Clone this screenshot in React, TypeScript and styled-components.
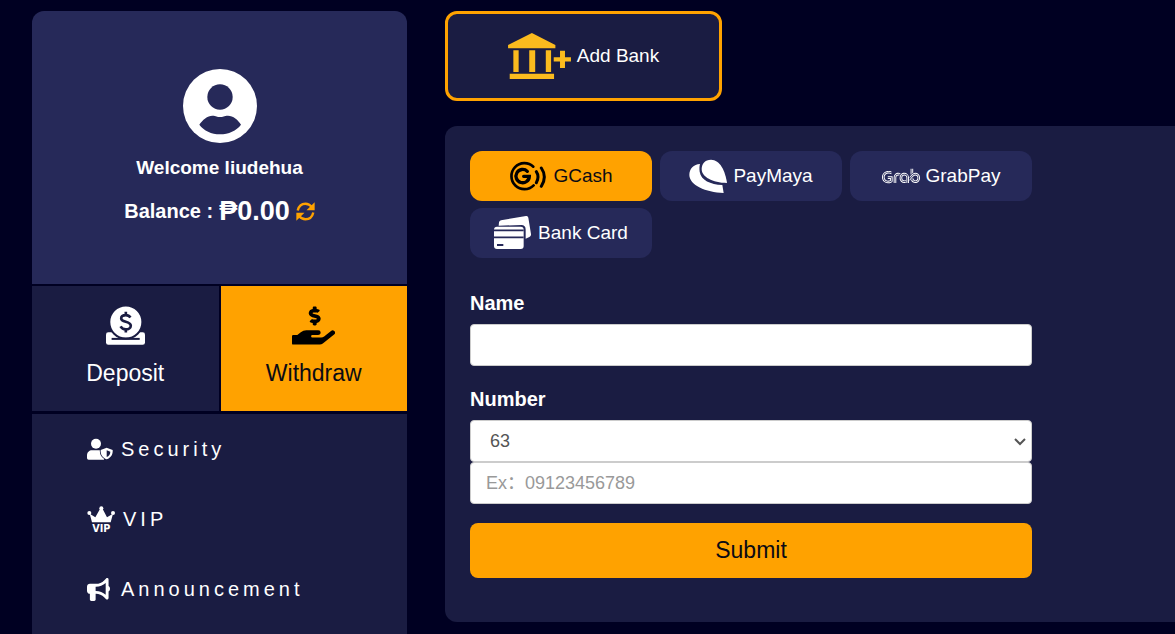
import React from "react";
import styled, { createGlobalStyle } from "styled-components";
import { FaHandHoldingUsd } from "react-icons/fa";
import { FaBullhorn } from "react-icons/fa6";
import { SiGrab } from "react-icons/si";

const color = {
  page: "#000022",
  panel: "#1a1c42",
  card: "#262959",
  accent: "#ffa200",
  gold: "#fbbb1e",
  ink: "#0b0b14",
};

const GlobalStyle = createGlobalStyle`
  * { box-sizing: border-box; }
  body {
    margin: 0;
    background: ${color.page};
    color: #fff;
    font-family: "Liberation Sans", "Noto Sans CJK SC", sans-serif;
  }
  button, input, select { font-family: inherit; margin: 0; }
  svg { display: block; flex: none; }
`;

const Page = styled.div`
  display: flex;
  align-items: stretch;
  gap: 38px;
  min-height: 100vh;
  padding: 11px 0 0 32px;
`;

const Sidebar = styled.aside`
  flex: 0 0 375px;
  display: flex;
  flex-direction: column;
`;

const Profile = styled.section`
  display: flex;
  flex-direction: column;
  align-items: center;
  padding: 58px 16px 57px;
  border-radius: 12px 12px 0 0;
  background: ${color.card};
`;

const Welcome = styled.h1`
  margin: 13px 0 15px;
  font-size: 19px;
  line-height: 24px;
`;

const Balance = styled.div`
  display: flex;
  align-items: center;
  gap: 6px;
  font-size: 20px;
  font-weight: bold;
  line-height: 32px;
`;

const Amount = styled.strong`
  font-size: 27px;
`;

const IconButton = styled.button`
  padding: 0;
  border: 0;
  background: none;
  color: ${color.accent};
  cursor: pointer;
`;

const Actions = styled.div`
  display: grid;
  grid-template-columns: 1fr 1fr;
  gap: 2px;
  margin: 2px 0 3px;
`;

const Action = styled.button<{ $active?: boolean }>`
  display: flex;
  flex-direction: column;
  align-items: center;
  gap: 14px;
  padding: 20px 8px 24px;
  border: 0;
  background: ${(p) => (p.$active ? color.accent : color.panel)};
  color: ${(p) => (p.$active ? color.ink : "#fff")};
  font-size: 23px;
  line-height: 28px;
  cursor: pointer;
`;

const WithdrawIcon = styled(FaHandHoldingUsd)`
  width: 43px;
  height: 39px;
  color: #000;
`;

const Menu = styled.nav`
  flex: 1;
  display: flex;
  flex-direction: column;
  background: ${color.panel};
`;

const MenuLink = styled.a`
  display: flex;
  align-items: center;
  gap: 7px;
  height: 70px;
  padding-left: 55px;
  color: #fff;
  font-size: 20px;
  letter-spacing: 4px;
  text-decoration: none;
`;

const MenuIcon = styled.span`
  display: flex;
  min-width: 27px;
`;

const Main = styled.main`
  flex: 1;
  min-width: 0;
  display: flex;
  flex-direction: column;
  align-items: flex-start;
  gap: 25px;
  padding-bottom: 12px;
`;

const AddBank = styled.button`
  display: flex;
  align-items: center;
  justify-content: center;
  gap: 6px;
  width: 277px;
  height: 90px;
  border: 3px solid ${color.accent};
  border-radius: 12px;
  background: ${color.panel};
  color: #fff;
  font-size: 19px;
  cursor: pointer;
`;

const Panel = styled.section`
  align-self: stretch;
  padding: 25px 25px 44px;
  border-radius: 12px 0 0 12px;
  background: ${color.panel};
`;

const Methods = styled.div`
  display: flex;
  flex-wrap: wrap;
  gap: 7px 8px;
  max-width: 562px;
`;

const Method = styled.button<{ $active?: boolean }>`
  display: flex;
  align-items: center;
  justify-content: center;
  gap: 6px;
  width: 182px;
  height: 50px;
  padding: 0;
  border: 0;
  border-radius: 12px;
  background: ${(p) => (p.$active ? color.accent : color.card)};
  color: ${(p) => (p.$active ? color.ink : "#fff")};
  font-size: 19px;
  cursor: pointer;
`;

const Form = styled.form`
  display: flex;
  flex-direction: column;
  max-width: 562px;
  margin-top: 33px;
`;

const Field = styled.div`
  & + & { margin-top: 21px; }
`;

const Label = styled.label`
  display: block;
  margin-bottom: 9px;
  font-size: 20px;
  font-weight: bold;
  line-height: 24px;
`;

const TextBox = styled.input`
  display: block;
  width: 100%;
  height: 42px;
  padding: 0 15px;
  border: 1px solid #ccc;
  border-radius: 4px;
  background: #fff;
  color: #555;
  font-size: 18px;
  &::placeholder { color: #999; opacity: 1; }
`;

const SelectWrap = styled.div`
  position: relative;
`;

const Select = styled.select`
  display: block;
  width: 100%;
  height: 42px;
  padding: 0 19px;
  border: 1px solid #ccc;
  border-radius: 4px;
  background: #fff;
  color: #555;
  font-size: 18px;
  appearance: none;
`;

const Chevron = styled.svg`
  position: absolute;
  right: 6px;
  top: 18px;
  pointer-events: none;
`;

const Submit = styled.button`
  height: 55px;
  margin-top: 19px;
  border: 0;
  border-radius: 8px;
  background: ${color.accent};
  color: ${color.ink};
  font-size: 23px;
  cursor: pointer;
`;

const AvatarIcon = () => (
  <svg width="74" height="74" viewBox="248 41 222 222" aria-hidden="true">
    <circle cx="359" cy="152" r="111" fill="#fff" />
    <circle cx="359" cy="125" r="38" fill={color.card} />
    <path
      d="M297 208C306 194 322 181 336 181C348 181 350 185 359 185C368 185 371 181 383 181C398 181 414 194 422 208C408 226 385 237 359 237C333 237 311 226 297 208Z"
      fill={color.card}
    />
  </svg>
);

const RefreshIcon = () => (
  <svg width="19" height="19" viewBox="0 0 56 56" fill="none" aria-hidden="true">
    <path d="M5 25C8 12 17 5 28 5C36 5 42 9 47 15M51 31C48 44 39 51 28 51C20 51 14 47 9 41" stroke="currentColor" strokeWidth="7" />
    <path d="M55 1V24H31ZM1 55V32H25Z" fill="currentColor" />
  </svg>
);

const DepositIcon = () => (
  <svg width="39" height="39" viewBox="0 0 118 117" aria-hidden="true">
    <rect y="79" width="118" height="38" rx="7" fill="#fff" />
    <circle cx="60" cy="48" r="50" fill="#fff" stroke={color.panel} strokeWidth="6" />
    <rect x="17" y="96" width="85" height="6" fill={color.panel} />
    <path
      d="M74 34C70 28 65 27 60 27C52 27 46 31 46 37C46 50 75 44 75 59C75 66 68 70 60 70C53 70 48 68 44 61M60 17V27M60 70V80"
      fill="none"
      stroke={color.panel}
      strokeWidth="8"
    />
  </svg>
);

const SecurityIcon = () => (
  <svg width="26" height="22" viewBox="51 52 78 66" aria-hidden="true">
    <circle cx="78" cy="69" r="15" fill="#fff" />
    <path d="M51 112V104C51 95 58 89 66 89H90C97 89 102 95 102 104V117H56Q51 117 51 112Z" fill="#fff" />
    <path
      d="M110 81L128 88C129 101 123 111 110 116C97 111 91 101 92 88Z"
      fill="#fff"
      stroke={color.panel}
      strokeWidth="5"
      paintOrder="stroke"
    />
    <path d="M110 89L121 93C121 101 117 106 110 109Z" fill={color.panel} />
  </svg>
);

const VipIcon = () => (
  <svg width="29" height="30" viewBox="50 257 87 90" fill="#fff" aria-hidden="true">
    <circle cx="93" cy="270" r="6" />
    <circle cx="57" cy="284" r="6" />
    <circle cx="128" cy="284" r="6" />
    <path d="M58 286L75 297L89 272H97L110 297L128 286L121 312H65Z" />
    <text x="93" y="340" fontFamily="DejaVu Sans, sans-serif" fontWeight="bold" fontSize="29" letterSpacing="0" textAnchor="middle">
      VIP
    </text>
  </svg>
);

const BankIcon = () => (
  <svg width="63" height="46" viewBox="203 98 190 139" fill={color.gold} aria-hidden="true">
    <path d="M203 144V134L275 98L346 134V144ZM219 150H235V216H219ZM267 150H285V216H267ZM317 150H333V216H317ZM208 221H342V237H208ZM360 152H375V171H393V184H375V204H360V184H341V171H360Z" />
  </svg>
);

const GCashIcon = () => (
  <svg width="38" height="38" viewBox="0 0 114 114" fill="none" stroke="#000" strokeLinecap="round" aria-hidden="true">
    <path d="M73 29A39 39 0 1 0 74 85" strokeWidth="8" />
    <path d="M55 43A20 20 0 1 0 61 58H44" strokeWidth="10" />
    <path d="M82 44Q92 59 82 77M97 33Q115 59 97 88" strokeWidth="9" />
  </svg>
);

const PayMayaIcon = () => (
  <svg width="38" height="38" viewBox="0 0 114 114" fill="#fff" aria-hidden="true">
    <path d="M114 78C109 42 93 8 66 8C48 8 38 20 38 36C38 60 70 77 114 78Z" />
    <path d="M33 21C14 22 1 35 1 54C1 84 50 106 104 108L100 84C64 82 36 70 32 44C31 34 31 28 33 21Z" />
  </svg>
);

const CardsIcon = () => (
  <svg width="38" height="38" viewBox="0 0 114 114" aria-hidden="true">
    <path d="M14 35L15 25Q16 20 21 19L96 6Q102 5 103 11L111 60Q112 66 106 69L95 74V47Q95 33 82 33Z" fill="#fff" />
    <rect y="38" width="89" height="67" rx="9" fill="#fff" />
    <path d="M0 49H89M0 70H89" stroke={color.card} strokeWidth="5" />
    <path d="M9 93H28" stroke={color.card} strokeWidth="6" />
  </svg>
);

const methods = [
  { name: "GCash", icon: <GCashIcon /> },
  { name: "PayMaya", icon: <PayMayaIcon /> },
  { name: "GrabPay", icon: <SiGrab size={38} /> },
  { name: "Bank Card", icon: <CardsIcon /> },
];

const links = [
  { name: "Security", icon: <SecurityIcon /> },
  { name: "VIP", icon: <VipIcon /> },
  { name: "Announcement", icon: <FaBullhorn size={23} /> },
];

export default function App() {
  return (
    <>
      <GlobalStyle />
      <Page>
        <Sidebar>
          <Profile>
            <AvatarIcon />
            <Welcome>Welcome liudehua</Welcome>
            <Balance>
              <span>Balance :</span>
              <Amount>₱0.00</Amount>
              <IconButton type="button" aria-label="Refresh balance">
                <RefreshIcon />
              </IconButton>
            </Balance>
          </Profile>
          <Actions>
            <Action type="button">
              <DepositIcon />
              Deposit
            </Action>
            <Action type="button" $active>
              <WithdrawIcon />
              Withdraw
            </Action>
          </Actions>
          <Menu>
            {links.map((l) => (
              <MenuLink key={l.name} href="#">
                <MenuIcon>{l.icon}</MenuIcon>
                {l.name}
              </MenuLink>
            ))}
          </Menu>
        </Sidebar>
        <Main>
          <AddBank type="button">
            <BankIcon />
            Add Bank
          </AddBank>
          <Panel>
            <Methods>
              {methods.map((m, i) => (
                <Method key={m.name} type="button" $active={i === 0}>
                  {m.icon}
                  {m.name}
                </Method>
              ))}
            </Methods>
            <Form>
              <Field>
                <Label htmlFor="name">Name</Label>
                <TextBox id="name" type="text" />
              </Field>
              <Field>
                <Label htmlFor="number">Number</Label>
                <SelectWrap>
                  <Select aria-label="Country code" defaultValue="63">
                    <option value="63">63</option>
                  </Select>
                  <Chevron width="12" height="8" viewBox="0 0 12 8" fill="none" stroke="#555" strokeWidth="2" aria-hidden="true">
                    <path d="M1 1L6 6L11 1" />
                  </Chevron>
                </SelectWrap>
                <TextBox id="number" type="tel" placeholder="Ex：09123456789" />
              </Field>
              <Submit type="submit">Submit</Submit>
            </Form>
          </Panel>
        </Main>
      </Page>
    </>
  );
}
